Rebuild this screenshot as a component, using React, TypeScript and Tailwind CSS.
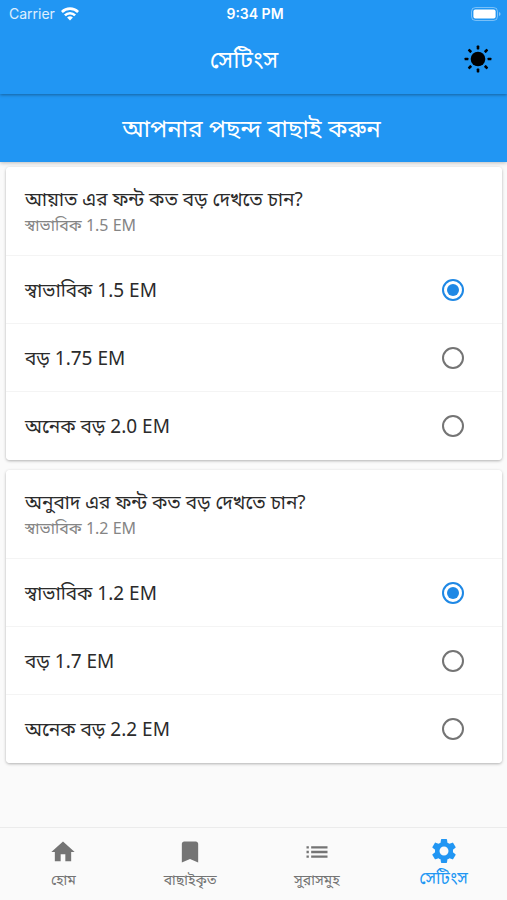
import { useState } from 'react';
import { MdBookmark, MdHome, MdList, MdSettings } from 'react-icons/md';

const cards = [
  {
    id: 'ayat',
    title: 'আয়াত এর ফন্ট কত বড় দেখতে চান?',
    options: ['স্বাভাবিক 1.5 EM', 'বড় 1.75 EM', 'অনেক বড় 2.0 EM'],
  },
  {
    id: 'translation',
    title: 'অনুবাদ এর ফন্ট কত বড় দেখতে চান?',
    options: ['স্বাভাবিক 1.2 EM', 'বড় 1.7 EM', 'অনেক বড় 2.2 EM'],
  },
];

const tabs = [
  { name: 'হোম', href: '#home', icon: MdHome },
  { name: 'বাছাইকৃত', href: '#selected', icon: MdBookmark },
  { name: 'সুরাসমুহ', href: '#surahs', icon: MdList },
  { name: 'সেটিংস', href: '#settings', icon: MdSettings, active: true },
];

const WifiIcon = () => (
  <svg width="18" height="14" viewBox="0 0 18 14" fill="none" stroke="currentColor" strokeWidth="2.6" aria-hidden="true">
    <path d="M0.9 5a11.4 11.4 0 0 1 16.2 0" />
    <path d="M3.9 8.3a7.2 7.2 0 0 1 10.2 0" />
    <path d="M9 13.6l-2.9-3a4.1 4.1 0 0 1 5.8 0z" fill="currentColor" stroke="none" />
  </svg>
);

const BatteryIcon = () => (
  <svg width="30" height="14" viewBox="0 0 30 14" aria-hidden="true">
    <rect x="0.5" y="0.5" width="26" height="13" rx="4" fill="none" stroke="#fff" strokeOpacity="0.4" />
    <rect x="2.4" y="2.4" width="22.2" height="9.2" rx="2" fill="#fff" />
    <path d="M28 5v4q1.6-.6 1.6-2T28 5z" fill="#fff" fillOpacity="0.45" />
  </svg>
);

const SunIcon = () => (
  <svg width="28" height="28" viewBox="0 0 28 28" aria-hidden="true">
    <circle cx="14" cy="14" r="7.3" />
    {[0, 90, 180, 270].map((angle) => (
      <rect key={angle} x="12.7" y="0.6" width="2.6" height="3.8" rx="0.6" transform={`rotate(${angle} 14 14)`} />
    ))}
    {[45, 135, 225, 315].map((angle) => (
      <rect key={angle} x="12.7" y="0.6" width="2.6" height="3.8" rx="0.6" transform={`rotate(${angle} 14 14)`} />
    ))}
  </svg>
);

const StatusBar = () => (
  <div className="grid h-7 grid-cols-3 items-center pl-[9px] pr-1.5 font-[Inter,sans-serif] text-sm">
    <div className="flex items-center gap-1.5">
      <span className="text-white/85">Carrier</span>
      <WifiIcon />
    </div>
    <div className="text-center font-semibold">9:34 PM</div>
    <div className="flex justify-end">
      <BatteryIcon />
    </div>
  </div>
);

const OptionCard = ({ id, title, options }: { id: string; title: string; options: string[] }) => {
  const [selected, setSelected] = useState(options[0]);

  return (
    <fieldset
      aria-labelledby={`${id}-title`}
      className="rounded bg-white pb-px shadow-[0_1px_3px_rgba(0,0,0,0.3)]"
    >
      <div className="flex h-[88px] flex-col justify-center px-[19px]">
        <h2 id={`${id}-title`} className="text-[19px] leading-7">{title}</h2>
        <p className="text-base leading-6 text-[#858585]">{selected}</p>
      </div>
      {options.map((option) => (
        <label
          key={option}
          className="flex h-[68px] items-center justify-between border-t border-[#f4f4f4] pl-[19px] pr-[38px] pt-px text-[19px]"
        >
          {option}
          <input
            type="radio"
            name={id}
            value={option}
            checked={selected === option}
            onChange={() => setSelected(option)}
            className="grid size-[22px] shrink-0 appearance-none place-content-center rounded-full border-2 border-[#747474] before:size-3 before:rounded-full checked:border-[#1e88e5] checked:before:bg-[#1e88e5]"
          />
        </label>
      ))}
    </fieldset>
  );
};

const App = () => {
  return (
    <div className="flex min-h-screen flex-col bg-[#fafafa] font-['Noto_Sans','Noto_Sans_Bengali',sans-serif] text-[#2b2b2b]">
      <header className="relative bg-[#2196f3] text-white shadow-[0_1px_3px_rgba(0,0,0,0.35)]">
        <StatusBar />
        <div className="grid h-[66px] grid-cols-[1fr_auto_1fr] items-center pb-1 pl-4 pr-[15px]">
          <h1 className="col-start-2 pr-5 text-2xl">সেটিংস</h1>
          <button type="button" aria-label="থিম" className="justify-self-end">
            <SunIcon />
          </button>
        </div>
      </header>

      <div className="flex h-[68px] items-center justify-center bg-[#2196f3] pr-1 text-2xl text-white shadow-[0_1px_4px_rgba(0,0,0,0.25)]">
        আপনার পছন্দ বাছাই করুন
      </div>

      <main className="flex flex-1 flex-col gap-2.5 pl-1.5 pr-[5px] pt-[5px]">
        {cards.map((card) => (
          <OptionCard key={card.id} {...card} />
        ))}
      </main>

      <nav className="grid h-[73px] grid-cols-4 border-t border-[#ebebeb]">
        {tabs.map(({ name, href, icon: Icon, active }) => (
          <a
            key={name}
            href={href}
            className={`flex flex-col items-center ${active ? 'pt-2 text-[17px] leading-6 text-[#2196f3]' : 'pt-2.5 text-sm leading-7 text-[#747474]'}`}
          >
            <Icon size={active ? 30 : 28} />
            {name}
          </a>
        ))}
      </nav>
    </div>
  );
};

export default App;
